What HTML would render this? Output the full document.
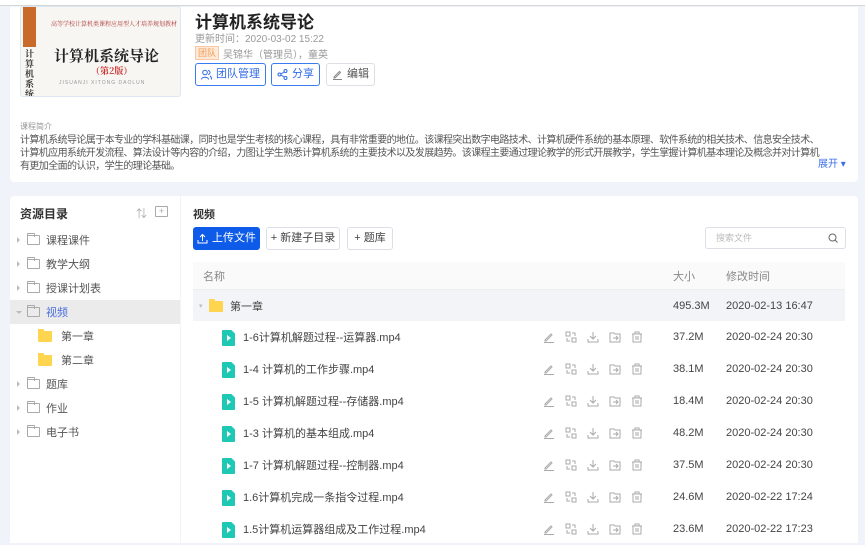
<!DOCTYPE html>
<html><head><meta charset="utf-8"><style>
*{margin:0;padding:0;box-sizing:border-box}
body{width:865px;height:543px;overflow:hidden;background:#f0f3f9;font-family:"Liberation Sans","Noto Sans CJK SC",sans-serif;position:relative;color:#333}
.abs{position:absolute}
.topline{left:0;top:0;width:865px;height:6px;background:#fff;border-bottom:1px solid #d6d6d6}
.card{background:#fff;border-radius:4px}
.btn{position:absolute;height:23px;border:1px solid #dcdfe6;border-radius:3px;font-size:11px;line-height:21px;color:#444;background:#fff;display:flex;align-items:center;justify-content:center;gap:4px;white-space:nowrap}
.tree{position:absolute;left:10px;width:170px;height:24px;font-size:11px;color:#555;display:flex;align-items:center}
.fold{width:13px;height:10px;border:1px solid #aaa;border-radius:1px;margin-right:6px;position:relative}
.fold:before{content:"";position:absolute;left:-1px;top:-3px;width:6px;height:3px;border:1px solid #aaa;border-bottom:none;border-radius:1px 1px 0 0}
.arr{width:0;height:0;border-left:3px solid #bbb;border-top:3px solid transparent;border-bottom:3px solid transparent;margin:0 7px 0 7px}
.yf{width:14px;height:11px;background:#ffd54f;border-radius:1px;margin-right:9px;position:relative}
.yf:before{content:"";position:absolute;left:0;top:-2px;width:6px;height:3px;background:#ffd54f;border-radius:1px}
.row{position:absolute;left:193px;width:652px;height:32px;font-size:11px;color:#444;display:flex;align-items:center}
.vid{position:absolute;left:29px;top:9px;width:13px;height:16px;background:#1ec8b4;border-radius:1px;clip-path:polygon(0 0,72% 0,100% 22%,100% 100%,0 100%)}
.vid:after{content:"";position:absolute;left:5px;top:5px;border-left:4px solid #fff;border-top:3px solid transparent;border-bottom:3px solid transparent}
.nm{position:absolute;left:50px}
.ico{position:absolute;top:10px}
.sz{position:absolute;left:480px}
.tm{position:absolute;left:533px}
.desc div{white-space:nowrap}
</style></head><body>
<div class="abs topline"></div>
<div class="abs card" style="left:10px;top:7px;width:848px;height:175px;border-radius:0 0 4px 4px"></div>
<div class="abs" style="left:20px;top:6px;width:161px;height:91px;border:1px solid #dde6f3;border-radius:3px;background:#f7f6f2;overflow:hidden">
 <div class="abs" style="left:2px;top:0;width:13px;height:40px;background:#c9692a"></div>
 <div class="abs" style="left:30px;top:12px;font-size:6px;color:#a33;font-family:'Noto Serif CJK SC',serif;white-space:nowrap">高等学校计算机类课程应用型人才培养规划教材</div>
 <div class="abs" style="left:33px;top:38px;font-size:15px;font-weight:bold;color:#222;font-family:'Noto Serif CJK SC',serif;white-space:nowrap">计算机系统导论</div>
 <div class="abs" style="left:70px;top:57px;font-size:9px;color:#c33;font-weight:bold;font-family:'Noto Serif CJK SC',serif">（第2版）</div>
 <div class="abs" style="left:38px;top:73px;font-size:5px;color:#999;letter-spacing:1px">JISUANJI XITONG DAOLUN</div>
 <div class="abs" style="left:4px;top:42px;width:10px;font-size:9px;font-weight:bold;line-height:10px;color:#333;font-family:'Noto Serif CJK SC',serif">计算机系统导论</div>
</div>
<div class="abs" style="left:195px;top:8px;font-size:17px;font-weight:bold;color:#222">计算机系统导论</div>
<div class="abs" style="left:195px;top:30px;font-size:10px;color:#999">更新时间：2020-03-02 15:22</div>
<div class="abs" style="left:195px;top:46px;font-size:9px;color:#f39b53;background:#fde9d8;padding:0 2px;line-height:12px;border:1px solid #f8c9a2">团队</div>
<div class="abs" style="left:223px;top:46px;font-size:10px;color:#999">吴锦华（管理员），童英</div>
<div class="btn" style="left:195px;top:63px;width:71px;border-color:#3a7bf0;color:#2e6be6"><svg width="11" height="11" viewBox="0 0 11 11" fill="none" stroke="#2e6be6"><circle cx="4" cy="3.5" r="2.3"/><path d="M0.5 10.5c0-3 7-3 7 0M7 1.5a2 2 0 010 4M9 7c1 .5 1.5 2 1.5 3.5"/></svg> 团队管理</div>
<div class="btn" style="left:271px;top:63px;width:49px;border-color:#3a7bf0;color:#2e6be6"><svg width="11" height="11" viewBox="0 0 11 11" fill="none" stroke="#2e6be6"><circle cx="2.5" cy="5.5" r="1.5"/><circle cx="8.5" cy="2" r="1.5"/><circle cx="8.5" cy="9" r="1.5"/><path d="M4 5l3-2M4 6l3 2"/></svg> 分享</div>
<div class="btn" style="left:326px;top:63px;width:49px;color:#555"><svg width="11" height="11" viewBox="0 0 11 11" fill="none" stroke="#888"><path d="M2 8L7.5 2.5l1 1L3 9H2zM1 10.5h9"/></svg> 编辑</div>
<div class="abs" style="left:20px;top:121px;font-size:8px;color:#999">课程简介</div>
<div class="abs desc" style="left:20px;top:134px;font-size:10px;line-height:13px;color:#555;letter-spacing:-0.6px">
<div>计算机系统导论属于本专业的学科基础课，同时也是学生考核的核心课程，具有非常重要的地位。该课程突出数字电路技术、计算机硬件系统的基本原理、软件系统的相关技术、信息安全技术、</div>
<div>计算机应用系统开发流程、算法设计等内容的介绍，力图让学生熟悉计算机系统的主要技术以及发展趋势。该课程主要通过理论教学的形式开展教学，学生掌握计算机基本理论及概念并对计算机</div>
<div>有更加全面的认识，学生的理论基础。</div></div>
<div class="abs" style="left:818px;top:155px;font-size:10px;color:#3a6fe8">展开 ▾</div>

<div class="abs card" style="left:10px;top:196px;width:170px;height:347px;border-radius:4px 0 0 0"></div>
<div class="abs" style="left:20px;top:205px;font-size:12px;font-weight:bold;color:#333">资源目录</div>
<div class="abs" style="left:136px;top:205px;font-size:11px;color:#aaa">⇅</div>
<div class="abs" style="left:155px;top:206px;width:13px;height:11px;border:1px solid #aaa;border-radius:1px;font-size:9px;line-height:9px;text-align:center;color:#aaa">+</div>
<div class="tree" style="top:228px"><span class="arr"></span><span class="fold"></span>课程课件</div>
<div class="tree" style="top:252px"><span class="arr"></span><span class="fold"></span>教学大纲</div>
<div class="tree" style="top:276px"><span class="arr"></span><span class="fold"></span>授课计划表</div>
<div class="tree" style="top:300px;background:#ebebeb;color:#4a6fe0"><span class="arr" style="border-left:3px solid transparent;border-right:3px solid transparent;border-top:3px solid #bbb;border-bottom:0;margin:0 5px 0 6px"></span><span class="fold"></span>视频</div>
<div class="tree" style="top:324px;padding-left:28px"><span class="yf"></span>第一章</div>
<div class="tree" style="top:348px;padding-left:28px"><span class="yf"></span>第二章</div>
<div class="tree" style="top:372px"><span class="arr"></span><span class="fold"></span>题库</div>
<div class="tree" style="top:396px"><span class="arr"></span><span class="fold"></span>作业</div>
<div class="tree" style="top:420px"><span class="arr"></span><span class="fold"></span>电子书</div>

<div class="abs card" style="left:181px;top:196px;width:677px;height:347px;border-radius:0 4px 0 0"></div>
<div class="abs" style="left:193px;top:206px;font-size:11px;color:#333;font-weight:bold">视频</div>
<div class="btn" style="left:193px;top:227px;width:67px;background:#0d5be8;border-color:#0d5be8;color:#fff"><svg width="11" height="11" viewBox="0 0 11 11" fill="none" stroke="#fff"><path d="M5.5 8V1.5M3 4l2.5-2.5L8 4M1 7v3h9V7"/></svg>上传文件</div>
<div class="btn" style="left:266px;top:227px;width:74px">+ 新建子目录</div>
<div class="btn" style="left:347px;top:227px;width:46px">+ 题库</div>
<div class="abs" style="left:705px;top:227px;width:141px;height:22px;border:1px solid #dcdfe6;border-radius:3px;font-size:9px;color:#bbb;line-height:20px;padding-left:10px">搜索文件<svg style="position:absolute;right:7px;top:5px" width="10" height="11" viewBox="0 0 10 11" fill="none" stroke="#666"><circle cx="4.5" cy="4.5" r="3.5"/><path d="M7 7l2.5 2.5"/></svg></div>
<div class="row" style="top:262px;height:28px;background:#fafafa;color:#888;border-bottom:1px solid #eee"><span style="position:absolute;left:10px">名称</span><span class="sz">大小</span><span class="tm">修改时间</span></div>
<div class="row" style="top:290px;height:31px;background:#f3f4f7"><span style="position:absolute;left:6px;color:#bbb;font-size:7px">▾</span><span class="yf" style="position:absolute;left:16px;top:11px"></span><span style="position:absolute;left:37px">第一章</span><span class="sz">495.3M</span><span class="tm">2020-02-13 16:47</span></div>

<div id="rows"></div>
<script>
var d=[["1-6计算机解题过程--运算器.mp4","37.2M","2020-02-24 20:30"],["1-4 计算机的工作步骤.mp4","38.1M","2020-02-24 20:30"],["1-5 计算机解题过程--存储器.mp4","18.4M","2020-02-24 20:30"],["1-3 计算机的基本组成.mp4","48.2M","2020-02-24 20:30"],["1-7 计算机解题过程--控制器.mp4","37.5M","2020-02-24 20:30"],["1.6计算机完成一条指令过程.mp4","24.6M","2020-02-22 17:24"],["1.5计算机运算器组成及工作过程.mp4","23.6M","2020-02-22 17:23"]];
var ic='<svg class="ico" style="left:350px" width="12" height="12" viewBox="0 0 12 12" fill="none" stroke="#aaa"><path d="M2 9L8 3l1 1-6 6H2zM1 11.5h10"/></svg>'+
'<svg class="ico" style="left:372px" width="12" height="12" viewBox="0 0 12 12" fill="none" stroke="#aaa"><rect x="1" y="1" width="4" height="4"/><rect x="7" y="7" width="4" height="4"/><path d="M7 2h3v3M2 7v3h3"/></svg>'+
'<svg class="ico" style="left:394px" width="12" height="12" viewBox="0 0 12 12" fill="none" stroke="#aaa"><path d="M6 1v7M3 5l3 3 3-3M1 8v3h10V8"/></svg>'+
'<svg class="ico" style="left:416px" width="12" height="12" viewBox="0 0 12 12" fill="none" stroke="#aaa"><path d="M1 2h4l1 1h5v8H1z M4 7h5M7 5l2 2-2 2"/></svg>'+
'<svg class="ico" style="left:438px" width="12" height="12" viewBox="0 0 12 12" fill="none" stroke="#aaa"><path d="M1 3h10M4 3V1h4v2M2 3v8h8V3M5 5v4M7 5v4"/></svg>';
var h='';d.forEach(function(r,i){h+='<div class="row" style="top:'+(321+i*32)+'px"><span class="vid"></span><span class="nm">'+r[0]+'</span>'+ic+'<span class="sz">'+r[1]+'</span><span class="tm">'+r[2]+'</span></div>';});
document.getElementById('rows').innerHTML=h;
</script>
</body></html>
